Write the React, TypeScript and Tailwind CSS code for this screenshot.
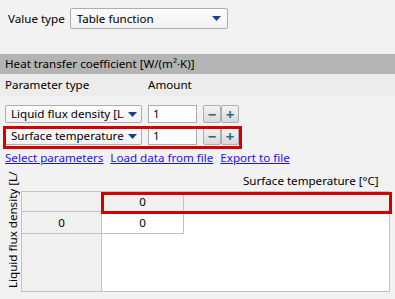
import React from "react";

const font = { fontFamily: '"Noto Sans", "DejaVu Sans", sans-serif' };

const Arrow = () => (
  <svg width="9" height="5" viewBox="0 0 9 5" className="shrink-0">
    <path d="M0 0 H9 L4.5 5 Z" fill="#1d3d8f" />
  </svg>
);

const Dropdown = ({ label }: { label: string }) => (
  <div className="w-[137px] h-[18px] flex items-center border border-[#adadad] rounded-[2px] bg-gradient-to-b from-[#fdfdfd] to-[#f1f1f1] overflow-hidden">
    <span className="flex-1 pl-[5px] whitespace-nowrap overflow-hidden">{label}</span>
    <div className="w-[17px] flex justify-center">
      <Arrow />
    </div>
  </div>
);

const StepButton = ({ sign }: { sign: string }) => (
  <div className="w-[18px] h-[18px] flex items-center justify-center border border-[#adadad] rounded-[2px] bg-gradient-to-b from-[#f4f4f4] to-[#d9d9d9] text-[#2d6b7f] text-[15px] font-bold leading-none">
    {sign}
  </div>
);

const ParamRow = ({ label }: { label: string }) => (
  <div className="flex items-center gap-[6px]">
    <Dropdown label={label} />
    <div className="w-[49px] h-[18px] border border-[#adadad] bg-white flex items-center pl-[4px]">1</div>
    <div className="flex">
      <StepButton sign="−" />
      <StepButton sign="+" />
    </div>
  </div>
);

export default function App() {
  return (
    <div className="relative w-[395px] h-[299px] bg-[#f2f2f2] text-[11.6px] text-black overflow-hidden" style={font}>
      <div className="flex items-center gap-[5px] pt-[8px] pl-[8px] h-[29px]">
        <span>Value type</span>
        <div className="w-[158px] h-[21px] flex items-center justify-between pl-[6px] pr-[6px] border border-[#adadad] rounded-[2px] bg-gradient-to-b from-[#fdfdfd] to-[#f1f1f1]">
          <span>Table function</span>
          <Arrow />
        </div>
      </div>

      <div className="mt-[25px] h-[20px] bg-[#b4b4b4] pl-[5px] flex items-center">
        Heat transfer coefficient [W/(m²·K)]
      </div>
      <div className="h-[22px] bg-[#ececec] pl-[5px] flex items-center">
        <span className="w-[143px]">Parameter type</span>
        <span>Amount</span>
      </div>

      <div className="pl-[5px] pt-[9px] flex flex-col gap-[4px] w-fit">
        <ParamRow label="Liquid flux density [L/m²/s]" />
        <div className="relative">
          <ParamRow label="Surface temperature [°C]" />
          <div className="absolute -left-[2px] -right-[3px] -top-[1px] -bottom-[4px] border-[3px] border-[#d40000]" />
        </div>
      </div>

      <div className="flex gap-[7px] pl-[5px] mt-[5px] text-[#1a10ff] underline leading-[16px]">
        <span>Select parameters</span>
        <span>Load data from file</span>
        <span>Export to file</span>
      </div>

      <div className="flex pl-[4px] mt-[5px] h-[121px]">
        <div className="w-[17px] h-[117px] overflow-hidden flex justify-center">
          <div className="[writing-mode:vertical-rl] rotate-180 whitespace-nowrap leading-[17px]">
            Liquid flux density [L/m²/s]
          </div>
        </div>
        <div className="w-[369px] flex flex-col">
          <div className="h-[20px] flex items-center pl-[222px] whitespace-nowrap">Surface temperature [°C]</div>
          <div className="flex-1 grid grid-cols-[80px_82px_1fr] grid-rows-[20px_22px_1fr] border border-[#c3c3c3] bg-white">
            <div className="bg-[#f0f0f0] border-r border-b border-[#c3c3c3]" />
            <div className="bg-[#f0f0f0] border-r border-[#c3c3c3] flex items-center justify-center">0</div>
            <div className="bg-[#f0f0f0]" />
            <div className="bg-[#f0f0f0] border-r border-b border-[#c3c3c3] flex items-center justify-center">0</div>
            <div className="border-r border-b border-[#c3c3c3] flex items-center justify-center">0</div>
            <div />
            <div className="bg-[#f0f0f0] border-r border-[#c3c3c3]" />
            <div />
            <div />
          </div>
        </div>
      </div>
      <div className="absolute left-[101px] top-[192px] w-[291px] h-[22px] border-[3px] border-[#d40000]" />
    </div>
  );
}
